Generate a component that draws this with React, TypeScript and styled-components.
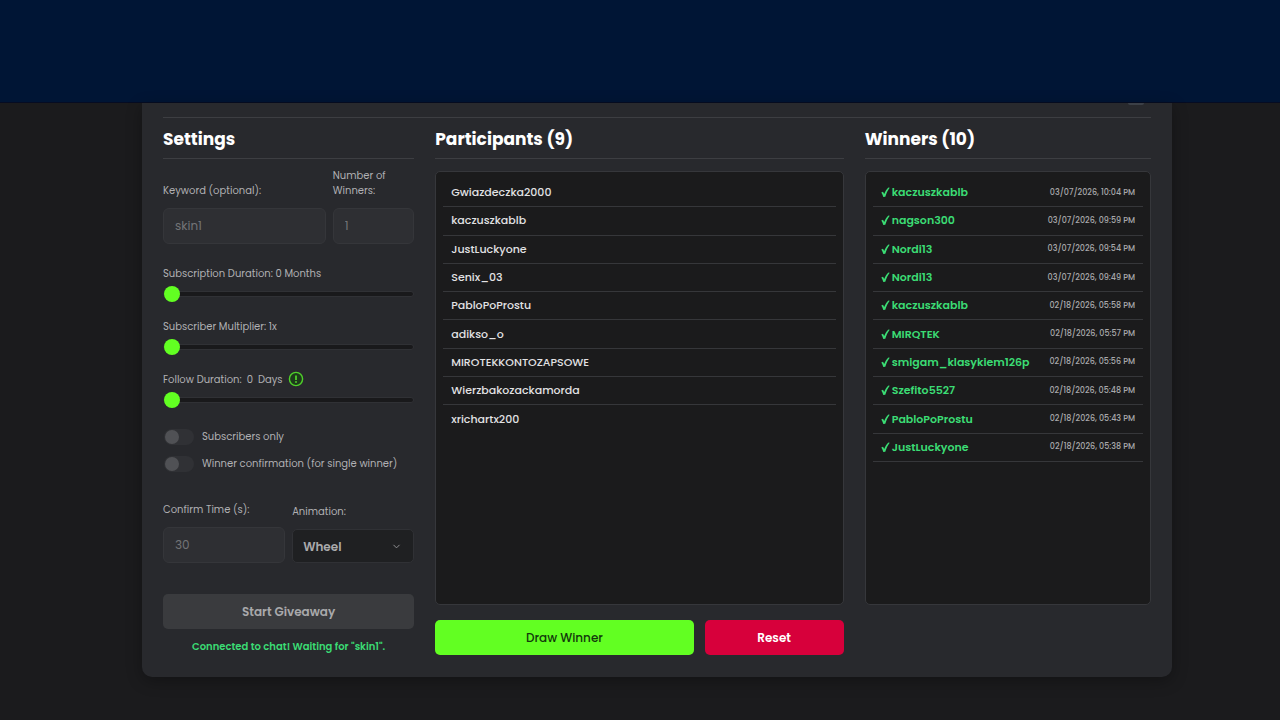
import React, { useState } from "react";
import styled, { createGlobalStyle } from "styled-components";
import { ChevronDown } from "lucide-react";

const GlobalStyle = createGlobalStyle`
  *, *::before, *::after { box-sizing: border-box; }
  body {
    margin: 0;
    background: #1b1b1d;
    color: #f4f4f5;
    font-family: Poppins, Inter, "Liberation Sans", sans-serif;
    font-size: 11px;
  }
  button, input, select { font-family: inherit; }
`;

const Page = styled.div`
  min-height: 100vh;
  display: flex;
  flex-direction: column;
`;

const Banner = styled.header`
  height: 103px;
  background: #001535;
  border-bottom: 1px solid #060c22;
`;

const Main = styled.main`
  padding: 0 108px 43px 142px;
`;

const Card = styled.section`
  padding: 0 21px 22px;
  background: #28292d;
  border-radius: 0 0 10px 10px;
  box-shadow: 0 4px 16px rgba(0, 0, 0, 0.3);
`;

const CardTop = styled.div`
  height: 15px;
  display: flex;
  justify-content: flex-end;
  align-items: flex-start;
  padding-right: 7px;
  border-bottom: 1px solid #3d3e42;
`;

const HandleEdge = styled.span`
  width: 16px;
  height: 2px;
  border-radius: 0 0 4px 4px;
  background: #3c4047;
`;

const Columns = styled.div`
  display: grid;
  grid-template-columns: 251fr 408fr 286fr;
  gap: 21px;
`;

const Column = styled.section`
  min-width: 0;
  display: flex;
  flex-direction: column;
`;

const Heading = styled.h2`
  margin: 0;
  height: 41px;
  line-height: 42px;
  font-size: 17px;
  font-weight: 700;
  color: #fff;
  border-bottom: 1px solid #3d3e42;
`;

const Label = styled.label`
  font-size: 10px;
  line-height: 15px;
  color: #b0b0b3;
`;

const FieldRow = styled.div<{ $columns: string; $top: number }>`
  display: grid;
  grid-template-columns: ${(p) => p.$columns};
  gap: 7px;
  align-items: end;
  margin-top: ${(p) => p.$top}px;
`;

const Field = styled.div`
  min-width: 0;
  display: flex;
  flex-direction: column;
  gap: 10px;
`;

const TextInput = styled.input`
  width: 100%;
  height: 36px;
  padding: 0 11px;
  font-size: 12px;
  color: #737477;
  background: #2e2f33;
  border: 1px solid #35363a;
  border-radius: 6px;
`;

const SelectBox = styled.div`
  display: grid;
  align-items: center;
  > * { grid-area: 1 / 1; }
  svg {
    justify-self: end;
    margin-right: 12px;
    color: #98989b;
    pointer-events: none;
  }
`;

const Select = styled.select`
  appearance: none;
  width: 100%;
  height: 34px;
  padding: 0 10px;
  font-size: 12px;
  font-weight: 600;
  color: #aaaaac;
  background: #1f2022;
  border: 1px solid #303135;
  border-radius: 5px;
`;

const Sliders = styled.div`
  display: grid;
  gap: 15px;
  margin-top: 20px;
`;

const SliderField = styled.div`
  display: flex;
  flex-direction: column;
  gap: 4px;
`;

const SliderHead = styled.div`
  height: 18px;
  display: flex;
  align-items: center;
  gap: 5px;
`;

const Unit = styled.span`
  margin-left: 5px;
`;

const InfoButton = styled.button`
  display: flex;
  padding: 0;
  border: 0;
  background: none;
`;

const Range = styled.input`
  appearance: none;
  width: 100%;
  height: 16px;
  margin: 0;
  background: transparent;
  &::-webkit-slider-runnable-track {
    height: 6px;
    background: #19191b;
    border: 1px solid #303135;
    border-radius: 3px;
  }
  &::-webkit-slider-thumb {
    appearance: none;
    width: 16px;
    height: 16px;
    margin-top: -6px;
    background: #62ff22;
    border-radius: 50%;
  }
`;

const Toggles = styled.div`
  display: grid;
  gap: 9px;
  margin-top: 20px;
`;

const ToggleLabel = styled.label`
  height: 18px;
  display: flex;
  align-items: center;
  gap: 8px;
  font-size: 10px;
  color: #b0b0b3;
`;

const Toggle = styled.input`
  appearance: none;
  width: 30px;
  height: 16px;
  margin: 0 0 0 1px;
  padding: 1px;
  background: #303135;
  border-radius: 8px;
  &::before {
    content: "";
    display: block;
    width: 14px;
    height: 14px;
    border-radius: 50%;
    background: #505155;
  }
  &:checked::before { margin-left: auto; background: #62ff22; }
`;

const Button = styled.button<{ $bg: string; $fg: string; $weight: number; $grow?: number }>`
  flex: ${(p) => (p.$grow ? `${p.$grow} 1 0` : "none")};
  height: 35px;
  padding: 0;
  font-size: 12px;
  font-weight: ${(p) => p.$weight};
  color: ${(p) => p.$fg};
  background: ${(p) => p.$bg};
  border: 0;
  border-radius: 5px;
`;

const StartArea = styled.div`
  display: grid;
  gap: 10px;
  margin-top: 31px;
`;

const Status = styled.p`
  margin: 0;
  font-size: 10px;
  line-height: 15px;
  font-weight: 600;
  text-align: center;
  color: #3bdc74;
`;

const ListBox = styled.div`
  height: 434px;
  margin-top: 12px;
  padding: 7px;
  overflow: hidden;
  background: #1b1b1c;
  border: 1px solid #36373b;
  border-radius: 5px;
`;

const List = styled.ul`
  height: 283px;
  margin: 0;
  padding: 0;
  list-style: none;
  display: grid;
  grid-template-rows: repeat(10, 1fr);
`;

const Item = styled.li`
  display: flex;
  align-items: center;
  padding: 0 8px;
  border-bottom: 1px solid #36373a;
  font-weight: 500;
  color: #e2e2e4;
  &:nth-child(9):last-child { border-bottom: 0; }
`;

const WinnerName = styled.span`
  display: flex;
  align-items: center;
  gap: 2px;
  font-weight: 600;
  color: #3bdc74;
`;

const Time = styled.time`
  margin-left: auto;
  font-size: 8px;
  font-weight: 500;
  white-space: nowrap;
  color: #a8a8ab;
`;

const Actions = styled.div`
  display: flex;
  gap: 11px;
  margin-top: 15px;
`;

const participants = [
  "Gwiazdeczka2000", "kaczuszkablb", "JustLuckyone", "Senix_03", "PabloPoProstu",
  "adikso_o", "MIROTEKKONTOZAPSOWE", "Wierzbakozackamorda", "xrichartx200",
];

const winners = [
  ["kaczuszkablb", "03/07/2026, 10:04 PM"],
  ["nagson300", "03/07/2026, 09:59 PM"],
  ["Nordi13", "03/07/2026, 09:54 PM"],
  ["Nordi13", "03/07/2026, 09:49 PM"],
  ["kaczuszkablb", "02/18/2026, 05:58 PM"],
  ["MIRQTEK", "02/18/2026, 05:57 PM"],
  ["smigam_klasykiem126p", "02/18/2026, 05:56 PM"],
  ["Szefito5527", "02/18/2026, 05:48 PM"],
  ["PabloPoProstu", "02/18/2026, 05:43 PM"],
  ["JustLuckyone", "02/18/2026, 05:38 PM"],
];

const Check = () => (
  <svg width="9" height="11" viewBox="0 0 9 11" aria-hidden="true">
    <path d="M0.3 5.6 L2 4.7 L3.2 6.9 C4.4 4.2 5.6 2.2 7.5 0.5 L8.7 0.8 C6.8 3.4 5.4 6.2 4.3 9.7 L2.3 10 C1.8 8.3 1.1 6.8 0.3 5.6 Z" fill="currentColor" />
  </svg>
);

const InfoIcon = () => (
  <svg width="16" height="16" viewBox="0 0 16 16" aria-hidden="true">
    <circle cx="8" cy="8" r="6.6" fill="#1d3a1b" stroke="#4fd02a" strokeWidth="1.4" />
    <path d="M8 4.4 V8.9" stroke="#4fd02a" strokeWidth="1.8" />
    <circle cx="8" cy="11" r="1" fill="#4fd02a" />
  </svg>
);

export default function App() {
  const [subscription, setSubscription] = useState(0);
  const [multiplier, setMultiplier] = useState(1);
  const [follow, setFollow] = useState(0);

  return (
    <Page>
      <GlobalStyle />
      <Banner />
      <Main>
        <Card>
          <CardTop><HandleEdge /></CardTop>
          <Columns>
            <Column>
              <Heading>Settings</Heading>
              <FieldRow $columns="2fr 1fr" $top={9}>
                <Field>
                  <Label htmlFor="keyword">Keyword (optional):</Label>
                  <TextInput id="keyword" defaultValue="skin1" disabled />
                </Field>
                <Field>
                  <Label htmlFor="count">Number of<br />Winners:</Label>
                  <TextInput id="count" defaultValue="1" disabled />
                </Field>
              </FieldRow>
              <Sliders>
                <SliderField>
                  <SliderHead><Label htmlFor="sub">Subscription Duration: {subscription} Months</Label></SliderHead>
                  <Range id="sub" type="range" min={0} max={12} value={subscription} onChange={(e) => setSubscription(+e.target.value)} />
                </SliderField>
                <SliderField>
                  <SliderHead><Label htmlFor="mult">Subscriber Multiplier: {multiplier}x</Label></SliderHead>
                  <Range id="mult" type="range" min={1} max={10} value={multiplier} onChange={(e) => setMultiplier(+e.target.value)} />
                </SliderField>
                <SliderField>
                  <SliderHead>
                    <Label htmlFor="follow">Follow Duration:<Unit>{follow}</Unit><Unit>Days</Unit></Label>
                    <InfoButton type="button" aria-label="About follow duration"><InfoIcon /></InfoButton>
                  </SliderHead>
                  <Range id="follow" type="range" min={0} max={30} value={follow} onChange={(e) => setFollow(+e.target.value)} />
                </SliderField>
              </Sliders>
              <Toggles>
                <ToggleLabel><Toggle type="checkbox" />Subscribers only</ToggleLabel>
                <ToggleLabel><Toggle type="checkbox" />Winner confirmation (for single winner)</ToggleLabel>
              </Toggles>
              <FieldRow $columns="1fr 1fr" $top={29}>
                <Field>
                  <Label htmlFor="confirm">Confirm Time (s):</Label>
                  <TextInput id="confirm" defaultValue="30" disabled />
                </Field>
                <Field>
                  <Label htmlFor="animation">Animation:</Label>
                  <SelectBox>
                    <Select id="animation" defaultValue="Wheel"><option>Wheel</option></Select>
                    <ChevronDown size={11} />
                  </SelectBox>
                </Field>
              </FieldRow>
              <StartArea>
                <Button type="button" $bg="#3a3b3e" $fg="#a9a9ab" $weight={600}>Start Giveaway</Button>
                <Status>Connected to chat! Waiting for "skin1".</Status>
              </StartArea>
            </Column>
            <Column>
              <Heading>Participants (9)</Heading>
              <ListBox>
                <List>{participants.map((name) => <Item key={name}>{name}</Item>)}</List>
              </ListBox>
              <Actions>
                <Button type="button" $bg="#62ff22" $fg="#12380c" $weight={500} $grow={258}>Draw Winner</Button>
                <Button type="button" $bg="#d7003b" $fg="#ffffff" $weight={600} $grow={139}>Reset</Button>
              </Actions>
            </Column>
            <Column>
              <Heading>Winners (10)</Heading>
              <ListBox>
                <List>
                  {winners.map(([name, time], i) => (
                    <Item key={i}><WinnerName><Check />{name}</WinnerName><Time>{time}</Time></Item>
                  ))}
                </List>
              </ListBox>
            </Column>
          </Columns>
        </Card>
      </Main>
    </Page>
  );
}
